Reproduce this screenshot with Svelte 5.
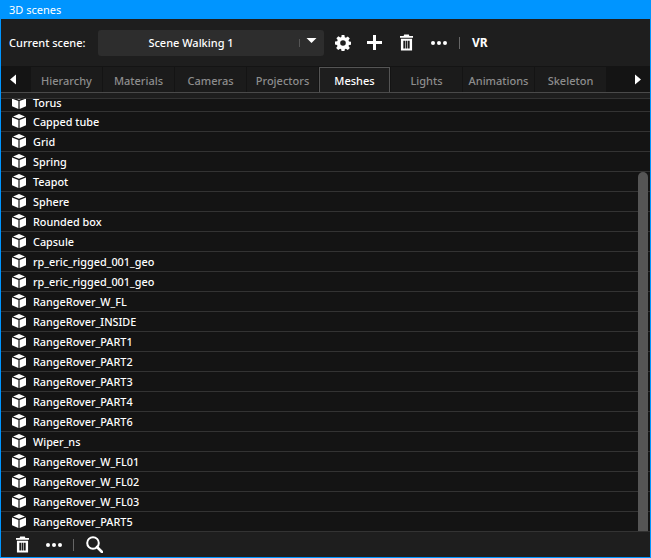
<script>
  const tabs = ['Hierarchy', 'Materials', 'Cameras', 'Projectors', 'Meshes', 'Lights', 'Animations', 'Skeleton'];
  const meshes = ['Capped tube', 'Grid', 'Spring', 'Teapot', 'Sphere', 'Rounded box', 'Capsule', 'rp_eric_rigged_001_geo', 'rp_eric_rigged_001_geo', 'RangeRover_W_FL', 'RangeRover_INSIDE', 'RangeRover_PART1', 'RangeRover_PART2', 'RangeRover_PART3', 'RangeRover_PART4', 'RangeRover_PART6', 'Wiper_ns', 'RangeRover_W_FL01', 'RangeRover_W_FL02', 'RangeRover_W_FL03', 'RangeRover_PART5'];
</script>

{#snippet cube()}
  <svg class="cube" viewBox="0 0 14 14"><path d="M7 0 13 2.4 7 4.8 1 2.4z"/><path d="M0 3.6 6.4 6V14L0 11.2z"/><path d="M14 3.6 7.6 6V14L14 11.2z"/></svg>
{/snippet}
{#snippet trash(cls)}
  <svg class={cls} viewBox="0 0 14 17"><path d="M4.5 0h5l.6 1.4H14v2H0v-2h3.9zM1 4.5h12V17H1zM3.6 6.6v8.3h1.9V6.6zM6.1 6.6v8.3h1.8V6.6zM8.5 6.6v8.3h1.9V6.6z" fill-rule="evenodd"/></svg>
{/snippet}
{#snippet dots()}
  <svg class="dots" viewBox="0 0 16 4"><circle cx="2" cy="2" r="2"/><circle cx="8" cy="2" r="2"/><circle cx="14" cy="2" r="2"/></svg>
{/snippet}

<div class="window">
  <div class="title">3D scenes</div>
  <div class="panel">
    <div class="toolbar">
      <span class="label">Current scene:</span>
      <div class="select">
        <span class="value">Scene Walking 1</span>
        <span class="sep"></span>
        <svg class="caret" viewBox="0 0 12 6"><path d="M0 0h12L6 6z"/></svg>
      </div>
      <svg class="gear" viewBox="0 0 16 16"><path fill-rule="evenodd" d="M6.6 0h2.8l.4 2.2 1.1.5 1.9-1.3 2 2-1.3 1.9.5 1.1 2.2.4v2.8l-2.2.4-.5 1.1 1.3 1.9-2 2-1.9-1.3-1.1.5-.4 2.2H6.6l-.4-2.2-1.1-.5-1.9 1.3-2-2 1.3-1.9-.5-1.1L0 9.4V6.6l2.2-.4.5-1.1-1.3-1.9 2-2 1.9 1.3 1.1-.5zM8 5.2a2.8 2.8 0 1 0 0 5.6 2.8 2.8 0 0 0 0-5.6z"/></svg>
      <svg class="plus" viewBox="0 0 14 14"><path d="M5.6 0h2.8v5.6H14v2.8H8.4V14H5.6V8.4H0V5.6h5.6z"/></svg>
      {@render trash('trash top')}
      {@render dots()}
      <span class="rule"></span>
      <span class="vr">VR</span>
    </div>
    <div class="tabbar">
      <svg class="arrow" viewBox="0 0 6 10"><path d="M6 0v10L0 5z"/></svg>
      <div class="tabs">
        {#each tabs as tab}
          <div class="tab" class:active={tab === 'Meshes'}>{tab}</div>
        {/each}
      </div>
      <svg class="arrow right" viewBox="0 0 6 10"><path d="M0 0v10l6-5z"/></svg>
    </div>
    <div class="list">
      <div class="row first">{@render cube()}<span>Torus</span></div>
      {#each meshes as mesh}
        <div class="row">{@render cube()}<span>{mesh}</span></div>
      {/each}
      <div class="thumb"></div>
    </div>
    <div class="footer">
      {@render trash('trash')}
      {@render dots()}
      <span class="rule small"></span>
      <svg class="search" viewBox="0 0 17 17"><circle cx="7" cy="7" r="5.8" fill="none" stroke="#fff" stroke-width="2"/><path d="M11 11l5 5" stroke="#fff" stroke-width="2.6" stroke-linecap="round"/></svg>
    </div>
  </div>
</div>

<style>
  :global(body) { margin: 0; background: #0095ff; }
  .window { width: 651px; height: 558px; display: flex; flex-direction: column; background: #0095ff; font-family: "Noto Sans", "Open Sans", sans-serif; color: #fff; overflow: hidden; }
  .title { height: 19px; flex: none; padding-left: 9px; font-size: 11px; line-height: 19px; }
  .panel { flex: 1; min-height: 0; margin: 0 1px 1px 1px; background: #1e1e1e; display: flex; flex-direction: column; }
  .toolbar { height: 47px; flex: none; display: flex; align-items: center; padding-left: 8px; font-weight: 500; }
  .label { width: 89px; font-size: 11px; }
  .select { width: 226px; height: 26px; background: #2d2d2d; border-radius: 3px; position: relative; display: flex; align-items: center; justify-content: center; font-size: 11px; }
  .value { margin-right: 40px; }
  .sep { position: absolute; left: 201px; top: 9px; height: 8px; width: 1px; background: #555; }
  .caret { position: absolute; left: 208px; top: 8px; width: 11px; height: 5px; fill: #fff; }
  .gear { width: 16px; height: 16px; fill: #fff; margin-left: 11px; }
  .plus { width: 15px; height: 15px; fill: #fff; margin-left: 16px; }
  .trash { width: 13px; height: 17px; fill: #fff; }
  .trash.top { margin-left: 18px; }
  .dots { width: 16px; height: 4px; fill: #fff; margin-left: 18px; }
  .footer .dots { margin-left: 17px; }
  .rule { width: 1px; height: 12px; background: #666; margin-left: 12px; }
  .rule.small { margin-left: 11px; }
  .vr { font-size: 12px; font-weight: 700; margin-left: 12px; }
  .tabbar { height: 26px; flex: none; display: flex; align-items: flex-start; background: #141414; position: relative; border-bottom: 1px solid #4a4a4a; }
  .arrow { width: 6px; height: 11px; fill: #fff; margin: 8px 0 0 9px; flex: none; }
  .arrow.right { margin: 8px 0 0 0; position: absolute; left: 634px; }
  .tabs { display: flex; gap: 1px; margin-left: 15px; height: 26px; width: 578px; overflow: hidden; font-size: 11px; font-weight: 500; padding-top: 1px; box-sizing: border-box; }
  .tab { flex: none; width: 71px; height: 25px; background: #1b1b1b; color: #8d8d8d; text-align: center; line-height: 27px; }
  .tab.active { height: 25px; color: #fff; background: #1e1e1e; border: 1px solid #555; border-bottom: none; width: 69px; line-height: 26px; margin-bottom: -1px; }
  .list { flex: 1; min-height: 0; background: #141414; position: relative; overflow: hidden; margin-top: 5px; }
  .row { height: 19px; border-top: 1px solid #333; display: flex; align-items: center; padding-left: 11px; gap: 7px; font-size: 10.85px; font-weight: 500; }
  .row.first { height: 12px; align-items: flex-end; overflow: hidden; }
  .row.first .cube { margin-bottom: 2px; }
  .row.first span { line-height: 12px; margin-bottom: 2px; }
  .cube { width: 14px; height: 14px; fill: #fff; flex: none; margin-top: -1px; }
  .thumb { position: absolute; left: 637px; top: 74px; width: 10px; bottom: 0; background: #555; border-radius: 5px 5px 0 0; }
  .footer { height: 25px; flex: none; display: flex; align-items: center; padding-left: 15px; border-top: 1px solid #333; }
  .search { width: 17px; height: 17px; margin-left: 12px; }
</style>
